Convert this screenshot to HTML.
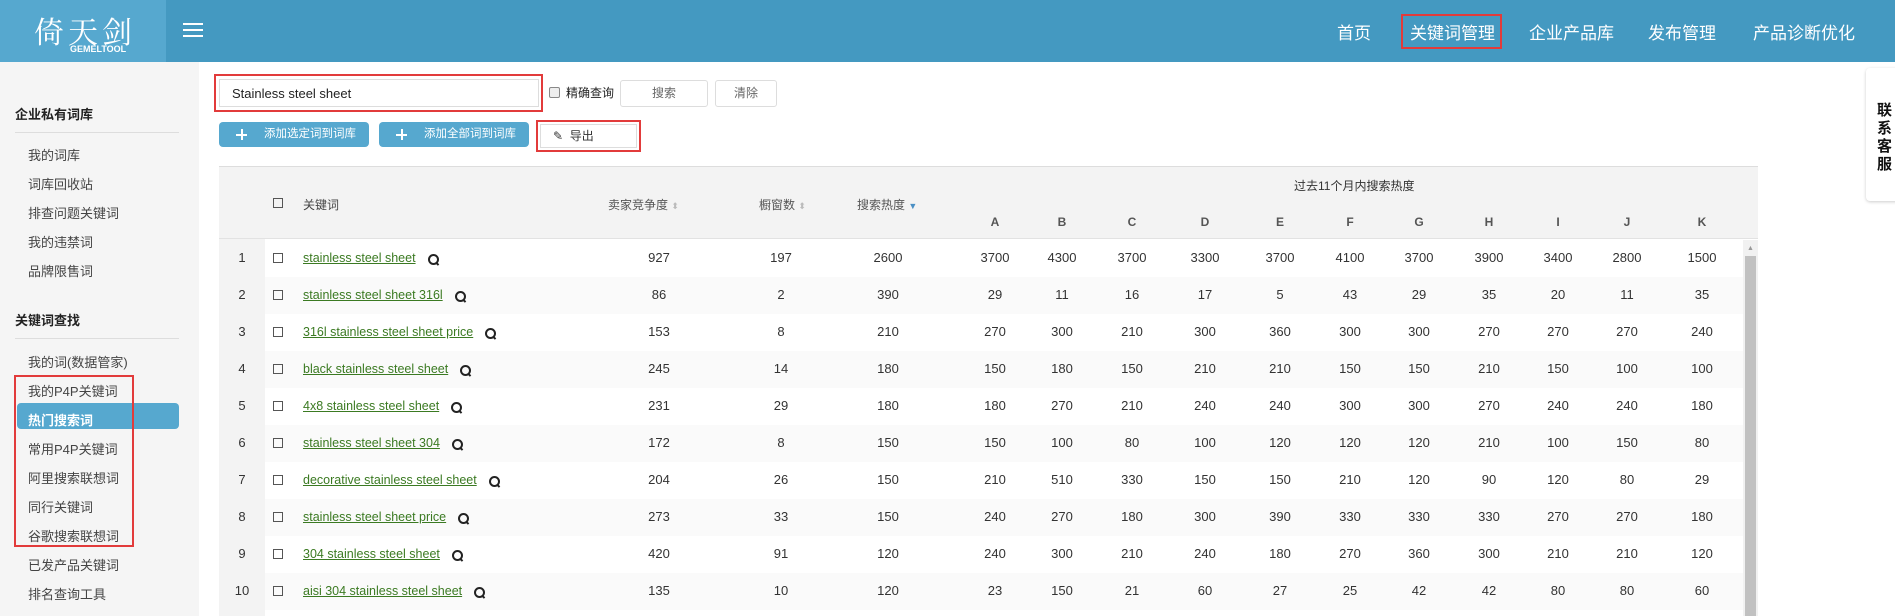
<!DOCTYPE html>
<html><head><meta charset="utf-8"><style>
*{margin:0;padding:0;box-sizing:border-box}
body{width:1895px;height:616px;overflow:hidden;background:#fff;font-family:"Liberation Sans","Noto Sans CJK SC",sans-serif;position:relative;color:#333}
.a{position:absolute}
#hdr{left:0;top:0;width:1895px;height:62px;background:#4499c1}
#logo{left:0;top:0;width:166px;height:62px;background:#56a8cf;color:#fff}
.nav{top:19px;color:#fff;font-size:17px;white-space:nowrap}
#side{left:0;top:62px;width:199px;height:554px;background:#f5f5f5}
.st{left:15px;font-size:13px;font-weight:bold;color:#222}
.sl{left:15px;width:164px;height:1px;background:#ddd}
.si{left:28px;font-size:13px;color:#444;white-space:nowrap}
.btn{height:25px;background:#56a8cf;border-radius:4px;color:#fff;font-size:11.5px;line-height:25px}
.gb{height:27px;border:1px solid #ddd;border-radius:3px;background:#fff;color:#666;font-size:12px;line-height:25px;text-align:center}
.c{position:absolute;width:70px;margin-left:-35px;text-align:center;font-size:13px;color:#333}
.row{position:absolute;left:219px;width:1524px;height:37px}
.kw{position:absolute;left:84px;top:11px;font-size:12.5px;color:#3b7a22;text-decoration:underline;white-space:nowrap}
.q{display:inline-block;width:11px;height:11px;border:2px solid #222;border-radius:50%;margin-left:12px;vertical-align:-3px;position:relative}
.q:after{content:"";position:absolute;right:-2px;bottom:-2px;width:3px;height:2px;background:#222;transform:rotate(45deg)}
.cb{position:absolute;left:54px;top:13px;width:10px;height:10px;border:1px solid #555}
.red{border:2px solid #e23b3b}
.plus{position:absolute;left:17px;top:7px;width:11px;height:11px}
.plus:before{content:"";position:absolute;left:0;top:5px;width:11px;height:2px;background:#fff}
.plus:after{content:"";position:absolute;left:5px;top:0;width:2px;height:11px;background:#fff}
</style></head><body>
<div id="hdr" class="a"></div>
<div id="logo" class="a">
<div class="a" style="left:34px;top:8px;font-size:30px;font-family:'Noto Serif CJK SC',serif;letter-spacing:4px">倚天剑</div>
<div class="a" style="left:70px;top:44px;font-size:9px;font-weight:bold">GEMELTOOL</div>
</div>
<div class="a" style="left:183px;top:23px;width:20px">
<div style="height:2px;background:#fff;margin-bottom:4px"></div><div style="height:2px;background:#fff;margin-bottom:4px"></div><div style="height:2px;background:#fff"></div></div>
<div class="a nav" style="left:1337px">首页</div>
<div class="a red" style="left:1401px;top:14px;width:101px;height:35px"></div>
<div class="a nav" style="left:1410px">关键词管理</div>
<div class="a nav" style="left:1529px">企业产品库</div>
<div class="a nav" style="left:1648px">发布管理</div>
<div class="a nav" style="left:1753px">产品诊断优化</div>

<div id="side" class="a"></div>
<div class="a st" style="top:104px">企业私有词库</div>
<div class="a sl" style="top:132px"></div>
<div class="a si" style="top:145px">我的词库</div>
<div class="a si" style="top:174px">词库回收站</div>
<div class="a si" style="top:203px">排查问题关键词</div>
<div class="a si" style="top:232px">我的违禁词</div>
<div class="a si" style="top:261px">品牌限售词</div>
<div class="a st" style="top:310px">关键词查找</div>
<div class="a sl" style="top:338px"></div>
<div class="a si" style="top:352px">我的词(数据管家)</div>
<div class="a si" style="top:381px">我的P4P关键词</div>
<div class="a" style="left:17px;top:403px;width:162px;height:26px;background:#56a8cf;border-radius:4px"></div>
<div class="a si" style="top:410px;color:#fff;font-weight:bold">热门搜索词</div>
<div class="a si" style="top:439px">常用P4P关键词</div>
<div class="a si" style="top:468px">阿里搜索联想词</div>
<div class="a si" style="top:497px">同行关键词</div>
<div class="a si" style="top:526px">谷歌搜索联想词</div>
<div class="a si" style="top:555px">已发产品关键词</div>
<div class="a si" style="top:584px">排名查询工具</div>
<div class="a red" style="left:14px;top:375px;width:120px;height:172px"></div>

<div class="a red" style="left:214px;top:74px;width:329px;height:38px"></div>
<div class="a" style="left:219px;top:79px;width:320px;height:28px;border:1px solid #ddd;background:#fff"></div>
<div class="a" style="left:232px;top:86px;font-size:13px;color:#222">Stainless steel sheet</div>
<div class="a" style="left:549px;top:87px;width:11px;height:11px;border:1px solid #888;border-radius:2px;background:#eee"></div>
<div class="a" style="left:566px;top:84px;font-size:12px;color:#222">精确查询</div>
<div class="a gb" style="left:620px;top:80px;width:88px">搜索</div>
<div class="a gb" style="left:715px;top:80px;width:62px">清除</div>
<div class="a btn" style="left:219px;top:122px;width:150px"><span class="plus"></span><span style="position:absolute;left:45px">添加选定词到词库</span></div>
<div class="a btn" style="left:379px;top:122px;width:150px"><span class="plus"></span><span style="position:absolute;left:45px">添加全部词到词库</span></div>
<div class="a red" style="left:536px;top:120px;width:105px;height:32px"></div>
<div class="a" style="left:540px;top:124px;width:97px;height:24px;border:1px solid #ddd;background:#fff"></div>
<div class="a" style="left:553px;top:127px;font-size:12px;color:#333">✎ &nbsp;导出</div>

<div class="a" style="left:219px;top:166px;width:1539px;height:73px;background:#f3f3f3;border-top:1px solid #ddd;border-bottom:1px solid #e2e2e2"></div>
<div class="a" style="left:219px;top:239px;width:46px;height:377px;background:#f3f3f3"></div>
<div class="a" style="left:273px;top:198px;width:10px;height:10px;border:1px solid #555"></div>
<div class="a" style="left:303px;top:196px;font-size:12px;color:#444">关键词</div>
<div class="a" style="left:608px;top:196px;font-size:12px;color:#555">卖家竞争度 <span style="color:#bbb;font-size:9px">⬍</span></div>
<div class="a" style="left:759px;top:196px;font-size:12px;color:#555">橱窗数 <span style="color:#bbb;font-size:9px">⬍</span></div>
<div class="a" style="left:857px;top:196px;font-size:12px;color:#555">搜索热度 <span style="color:#4a8fc4;font-size:9px">▼</span></div>
<div class="a" style="left:1294px;top:177px;font-size:12px;color:#333">过去11个月内搜索热度</div>
<div id="letters"></div>
<div id="rows"></div>
<div class="a" style="left:1743px;top:240px;width:15px;height:376px;background:#f1f1f1"></div>
<div class="a" style="left:1745px;top:256px;width:11px;height:360px;background:#c1c1c1"></div>
<div class="a" style="left:1747px;top:245px;font-size:7px;color:#999">▲</div>

<div class="a" style="left:1866px;top:68px;width:40px;height:133px;background:#fff;border-radius:4px;box-shadow:0 1px 3px rgba(0,0,0,.2)"></div>
<div class="a" style="left:1877px;top:102px;width:16px;font-size:15px;font-weight:bold;line-height:18px;color:#111">联系客服</div>

<script>
var cols=[659,781,888,995,1062,1132,1205,1280,1350,1419,1489,1558,1627,1702];
var L="ABCDEFGHIJK",h="";
for(var i=0;i<11;i++)h+='<div class="c" style="left:'+cols[i+3]+'px;top:215px;font-size:12px;font-weight:bold;color:#555">'+L[i]+'</div>';
document.getElementById("letters").innerHTML=h;
var d=[["stainless steel sheet",927,197,2600,3700,4300,3700,3300,3700,4100,3700,3900,3400,2800,1500],
["stainless steel sheet 316l",86,2,390,29,11,16,17,5,43,29,35,20,11,35],
["316l stainless steel sheet price",153,8,210,270,300,210,300,360,300,300,270,270,270,240],
["black stainless steel sheet",245,14,180,150,180,150,210,210,150,150,210,150,100,100],
["4x8 stainless steel sheet",231,29,180,180,270,210,240,240,300,300,270,240,240,180],
["stainless steel sheet 304",172,8,150,150,100,80,100,120,120,120,210,100,150,80],
["decorative stainless steel sheet",204,26,150,210,510,330,150,150,210,120,90,120,80,29],
["stainless steel sheet price",273,33,150,240,270,180,300,390,330,330,330,270,270,180],
["304 stainless steel sheet",420,91,120,240,300,210,240,180,270,360,300,210,210,120],
["aisi 304 stainless steel sheet",135,10,120,23,150,21,60,27,25,42,42,80,80,60]];
h="";
for(var r=0;r<10;r++){var t=240+r*37;
h+='<div class="row" style="top:'+t+'px;background:'+(r%2?'#fafafa':'#fff')+'"><div style="position:absolute;left:0;top:0;width:46px;height:37px;background:#f3f3f3"></div><div class="c" style="left:23px;top:10px">'+(r+1)+'</div><div class="cb"></div><div class="kw">'+d[r][0]+'<span class="q"></span></div></div>';
for(var j=1;j<15;j++)h+='<div class="c" style="left:'+cols[j-1]+'px;top:'+(t+10)+'px">'+d[r][j]+'</div>';}
document.getElementById("rows").innerHTML=h;
</script>
</body></html>
